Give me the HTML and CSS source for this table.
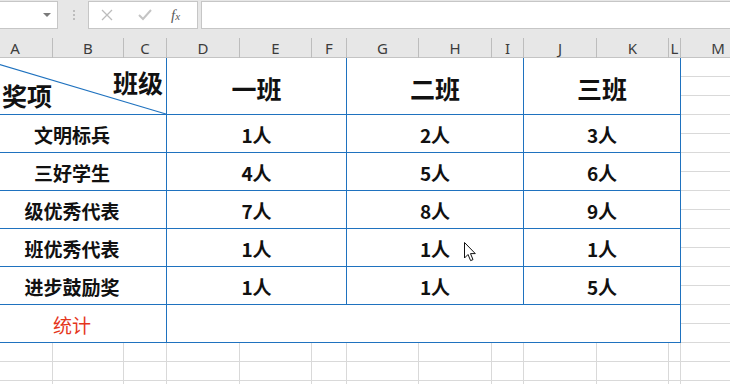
FILE: index.html
```html
<!DOCTYPE html>
<html lang="zh-CN">
<head>
  <meta charset="UTF-8" />
  <title>奖项统计</title>
  <link rel="stylesheet" href="styles.css">
</head>
<body>

  <!-- barra de fórmulas -->
  <div class="toolbar">
    <div class="namebox"><span class="caret"></span></div>
    <div class="grip"></div>
    <div class="fbuttons">
      <svg class="btn-cancel" width="12" height="12" viewBox="0 0 12 12">
        <path d="M1 1 L11 11 M11 1 L1 11" stroke="#bcbcbc" stroke-width="1.3" fill="none"/>
      </svg>
      <svg class="btn-ok" width="14" height="12" viewBox="0 0 14 12">
        <path d="M1 6 L5 10 L13 1" stroke="#c4c4c4" stroke-width="2" fill="none"/>
      </svg>
      <span class="btn-fx">f<span class="fx-x">x</span></span>
    </div>
    <div class="formula"></div>
  </div>

  <div class="colheads">
    <div>A</div><div>B</div><div>C</div><div>D</div><div>E</div><div>F</div><div>G</div>
    <div>H</div><div>I</div><div>J</div><div>K</div><div>L</div><div>M</div>
  </div>

  <div class="sheet">
    <div class="lines">
      <div></div><div></div><div></div><div></div><div></div><div></div><div></div>
      <div></div><div></div><div></div><div></div><div></div><div></div>
    </div>

    <div class="table">
      <div class="cell corner">
        <svg class="diag" viewBox="0 0 100 100" preserveAspectRatio="none">
          <line x1="0" y1="0" x2="100" y2="100" stroke="#1f72bf" stroke-width="1.1" vector-effect="non-scaling-stroke"/>
        </svg>
        <span class="corner-top">班级</span>
        <span class="corner-bottom">奖项</span>
      </div>
      <div class="cell head">一班</div>
      <div class="cell head">二班</div>
      <div class="cell head">三班</div>

      <div class="cell">文明标兵</div>
      <div class="cell">1人</div>
      <div class="cell">2人</div>
      <div class="cell">3人</div>

      <div class="cell">三好学生</div>
      <div class="cell">4人</div>
      <div class="cell">5人</div>
      <div class="cell">6人</div>

      <div class="cell">级优秀代表</div>
      <div class="cell">7人</div>
      <div class="cell">8人</div>
      <div class="cell">9人</div>

      <div class="cell">班优秀代表</div>
      <div class="cell">1人</div>
      <div class="cell">1人</div>
      <div class="cell">1人</div>

      <div class="cell">进步鼓励奖</div>
      <div class="cell">1人</div>
      <div class="cell">1人</div>
      <div class="cell">5人</div>

      <div class="cell total">统计</div>
      <div class="cell total-value"></div>
    </div>
  </div>

  <svg class="cursor" width="14" height="22" viewBox="0 0 14 22">
    <path d="M1.5 1.5 L1.5 17 L5 13.5 L7.6 19.6 L10 18.6 L7.5 12.6 L12.3 12.6 Z" fill="#fff" stroke="#111" stroke-width="1" stroke-linejoin="round"/>
  </svg>

</body>
</html>
```

FILE: styles.css
```css
:root {
  --cols: 75px 71px 43px 73px 72px 35px 72px 73px 32px 73px 72px 12px 75px;
  --grid: #d9d9d9;
  --blue: #1f72bf;
}

body {
  margin: 0;
  width: 730px;
  height: 384px;
  overflow: hidden;
  background-color: #e7e7e7;
  font-family: "Noto Sans", "Noto Sans CJK SC", sans-serif;
}

/* barra de fórmulas */
.toolbar {
  display: flex;
  align-items: flex-start;
  height: 38px;
}

.namebox {
  box-sizing: border-box;
  margin-top: 1px;
  margin-left: -4px;
  width: 62px;
  height: 28px;
  background-color: #fff;
  border: 1px solid #c6c6c6;
  display: flex;
  align-items: center;
  justify-content: flex-end;
  padding-right: 6px;
}

.caret {
  width: 0;
  height: 0;
  border-left: 4px solid transparent;
  border-right: 4px solid transparent;
  border-top: 4px solid #7a7a7a;
}

.grip {
  margin-top: 10px;
  margin-left: 15px;
  width: 2px;
  height: 10px;
  background: repeating-linear-gradient(#bdbdbd 0 2px, transparent 2px 4px);
}

.fbuttons {
  box-sizing: border-box;
  margin-top: 1px;
  margin-left: 13px;
  width: 110px;
  height: 28px;
  background-color: #fff;
  border: 1px solid #c6c6c6;
  display: flex;
  align-items: center;
}

.btn-cancel {
  margin-left: 12px;
}

.btn-ok {
  margin-left: 25px;
}

.btn-fx {
  margin-left: 19px;
  font-family: "Liberation Serif", serif;
  font-style: italic;
  font-size: 15px;
  color: #5a5a5a;
}

.fx-x {
  font-size: 11px;
}

.formula {
  box-sizing: border-box;
  margin-top: 1px;
  margin-left: 3px;
  margin-right: -3px;
  flex: 1;
  height: 28px;
  background-color: #fff;
  border: 1px solid #c6c6c6;
}

/* letras de columnas */
.colheads {
  display: grid;
  grid-template-columns: var(--cols);
  margin-left: -22px;
  height: 20px;
  border-bottom: 1px solid #c4c4c4;
  box-sizing: border-box;
}

.colheads div {
  border-right: 1px solid #bdbdbd;
  text-align: center;
  font-size: 15px;
  line-height: 20px;
  color: #3c3c3c;
}

/* hoja */
.sheet {
  display: grid;
  margin-left: -22px;
}

.lines,
.table {
  grid-area: 1 / 1;
}

.lines {
  display: grid;
  grid-template-columns: var(--cols);
  height: 342px;
  background: #fff repeating-linear-gradient(to bottom, transparent 0 18px, var(--grid) 18px 19px);
}

.lines div {
  border-right: 1px solid var(--grid);
}

.table {
  align-self: start;
  justify-self: start;
  display: grid;
  grid-template-columns: 75px 71px 43px 73px 72px 35px 72px 73px 32px 73px 72px 12px;
  grid-template-rows: 57px repeat(6, 38px);
}

.cell {
  grid-column: span 3;
  box-sizing: border-box;
  background-color: #fff;
  border-right: 1px solid var(--blue);
  border-bottom: 1px solid var(--blue);
  display: flex;
  align-items: center;
  justify-content: center;
  padding-top: 2px;
  font-family: "Noto Sans CJK SC", sans-serif;
  font-weight: bold;
  font-size: 19px;
  line-height: 1;
  color: #111;
}

.cell.head {
  font-size: 25px;
  padding-top: 4px;
}

.cell.total {
  font-weight: normal;
  color: #e5361c;
}

.cell.total-value {
  grid-column: span 9;
}

/* celda con diagonal: 班级 arriba a la derecha, 奖项 abajo a la izquierda */
.corner {
  position: relative;
  flex-direction: column;
  align-items: stretch;
  justify-content: flex-start;
  padding: 12px 3px 0 24px;
  font-size: 25px;
}

.corner-top {
  align-self: flex-end;
}

.corner-bottom {
  align-self: flex-start;
  margin-top: -12px;
}

.diag {
  position: absolute;
  left: 0;
  top: 0;
  width: 100%;
  height: 100%;
}

.cursor {
  position: absolute;
  left: 463px;
  top: 241px;
}
```
